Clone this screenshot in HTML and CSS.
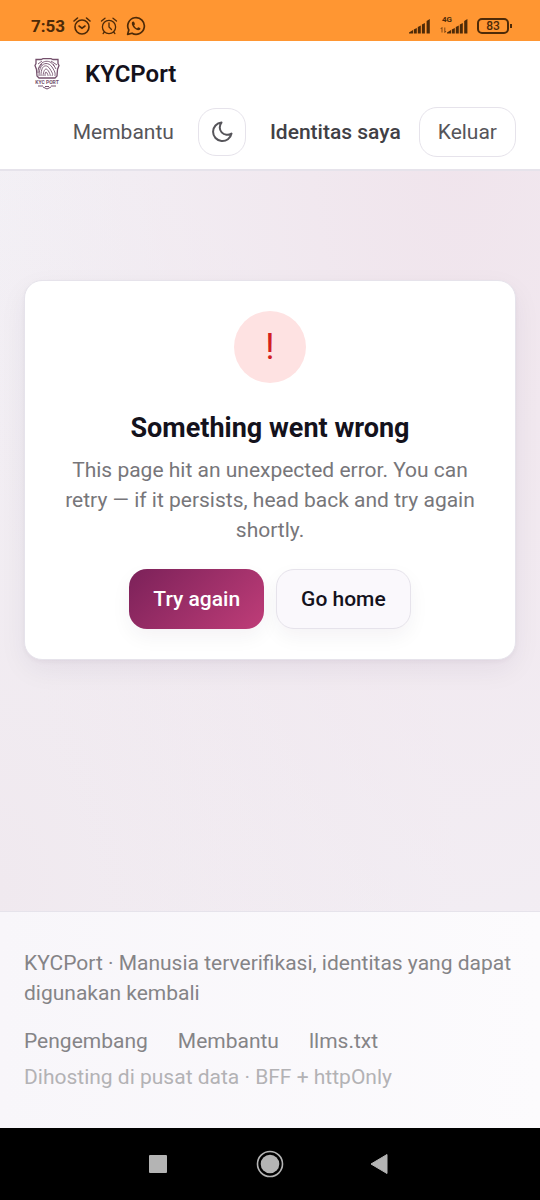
FILE: index.html
```html
<!DOCTYPE html>
<html lang="id">
<head>
    <meta charset="UTF-8">
    <meta name="viewport" content="width=device-width, initial-scale=1.0">
    <title>KYCPort</title>
    <link rel="stylesheet" href="styles.css">
</head>
<body>
    <div class="status-bar">
        <div class="status-left">
            <span class="clock">7:53</span>
            <svg width="20" height="20" viewBox="0 0 20 20" fill="none" stroke="currentColor" stroke-width="1.6" stroke-linecap="round">
                <circle cx="10" cy="11" r="7"/>
                <path d="M7 10l3 2.2 3-2.2M2 5l3.5-3M18 5l-3.5-3"/>
            </svg>
            <svg width="20" height="20" viewBox="0 0 20 20" fill="none" stroke="currentColor" stroke-width="1.3" stroke-linecap="round">
                <circle cx="10" cy="11" r="6.6"/>
                <path d="M10 7v4l2.5 2.5M2.5 5L6 2.2M17.5 5L14 2.2M5.3 16l-1.2 1.6M14.7 16l1.2 1.6"/>
            </svg>
            <svg width="20" height="20" viewBox="0 0 20 20" fill="none" stroke="currentColor" stroke-width="1.7" stroke-linejoin="round">
                <path d="M1.6 18.4l1.2-4.4A8.3 8.3 0 1 1 6 17.2z"/>
                <path d="M7.2 5.6c-.7 0-1.5.9-1.4 2 .2 3 3.7 6.5 6.5 6.7 1.2 0 2.2-.8 2.2-1.7 0-.5-1.8-1.5-2.3-1.4-.4.1-.8 1.2-1.2 1.1-1-.3-2.5-1.7-2.9-2.8-.1-.4.8-.8.8-1.3 0-.6-.7-2.600-1.700-2.600z" fill="currentColor" stroke="none"/>
            </svg>
        </div>
        <div class="status-right">
            <svg width="22" height="16" viewBox="0 0 22 16" fill="currentColor">
                <path d="M0 15.5v-1L4 12v3.5zM4.800 11.500l3-1.500v5.500h-3zM8.800 9l3-1.500v8h-3zM12.900 6.500l3-1.500v10.500h-3zM17.600 3L20.800 1v14.500h-3.200z"/>
            </svg>
            <div class="mobile-data">
                <span class="network">4G</span>
                <svg width="28" height="16" viewBox="0 0 28 16" fill="currentColor">
                    <path d="M2 14.5v-5M.7 11L2 9.5M4.8 9.5v5M4.8 14.5L6 13" fill="none" stroke="currentColor" stroke-width=".7"/>
                    <path d="M7 15.5v-1l4-2.500v3.500zM11.800 11.500l3-1.500v5.500h-3zM15.800 9l3-1.500v8h-3zM19.800 6.500l3-1.500v10.500h-3zM24.200 3l3.200-2v14.500h-3.200z"/>
                </svg>
            </div>
            <span class="battery">83</span>
        </div>
    </div>

    <header class="header">
        <a class="brand" href="#">
            <svg class="brand-logo" width="28" height="32" viewBox="0 0 28 32" fill="none" stroke="currentColor">
                <path d="M3 1.500h5L10 .7h8l2 .8h5v4l1 2-1.500 4L24 18l-2 2H6l-2-2-.5-6.500L2 7.500l1-2z" stroke-width="1.3"/>
                <path d="M5 15c0-13 12-15 16-7M6 18c0-14 9-15 13-9s3 7 3 9M8 18c0-12 6-12 9-7s3 5 2 7M10 18c1-9 4-8 6-4s1 3 1 4M12 18c0-4 1-5 2-3s1 2 1 3M5 6l4-3M18 3l6 4M20 6l3 5M5 11l4-5" stroke-width=".9"/>
                <path d="M5 28h5M18 28h5M10 29l4 2 4-2M12 28.500h4" stroke-width="1"/>
                <text x="14" y="26" text-anchor="middle" font-size="5" font-weight="700" fill="currentColor" stroke="none">KYC PORT</text>
            </svg>
            <span>KYCPort</span>
        </a>
        <nav class="nav">
            <a href="#">Membantu</a>
            <button class="theme-toggle" type="button" aria-label="Mode gelap">
                <svg width="24" height="24" viewBox="0 0 24 24" fill="none" stroke="currentColor" stroke-width="2" stroke-linejoin="round">
                    <path d="M21.500 13.500A9.300 9.300 0 1 1 11.500 2.500a7.500 7.500 0 0 0 10 11z"/>
                </svg>
            </button>
            <a class="active" href="#">Identitas saya</a>
            <button class="logout" type="button">Keluar</button>
        </nav>
    </header>

    <main class="main">
        <section class="card">
            <div class="error-icon">!</div>
            <h1>Something went wrong</h1>
            <p>This page hit an unexpected error. You can retry — if it persists, head back and try again shortly.</p>
            <div class="actions">
                <button class="btn btn-primary" type="button">Try again</button>
                <a class="btn btn-secondary" href="#">Go home</a>
            </div>
        </section>
    </main>

    <footer class="footer">
        <p>KYCPort · Manusia terverifikasi, identitas yang dapat digunakan kembali</p>
        <div class="footer-links">
            <a href="#">Pengembang</a>
            <a href="#">Membantu</a>
            <a href="#">llms.txt</a>
        </div>
        <p class="hosting">Dihosting di pusat data · BFF + httpOnly</p>
    </footer>

    <div class="system-nav">
        <button type="button" aria-label="Recents">
            <svg width="28" height="28" viewBox="0 0 28 28" fill="currentColor"><rect x="4" y="5" width="18" height="18" rx="1"/></svg>
        </button>
        <button type="button" aria-label="Home">
            <svg width="28" height="28" viewBox="0 0 28 28" fill="currentColor"><circle cx="14" cy="14" r="9.3"/><circle cx="14" cy="14" r="12.5" fill="none" stroke="currentColor" stroke-width="1.6"/></svg>
        </button>
        <button type="button" aria-label="Back">
            <svg width="28" height="28" viewBox="0 0 28 28" fill="currentColor" stroke="currentColor" stroke-linejoin="round"><path d="M4 14l16-9.5v19z"/></svg>
        </button>
    </div>
</body>
</html>
```
FILE: styles.css
```css
:root {
    --text: #14121c;
    --muted: #77767a;
    --nav-text: #56555a;
    --border: #e6e3eb;
    --status-bg: #ff9632;
    --status-text: #4d2a08;
}

* {
    box-sizing: border-box;
}

body {
    margin: 0;
    min-height: 100vh;
    display: flex;
    flex-direction: column;
    font-family: Roboto, "Liberation Sans", sans-serif;
    font-size: 21px;
    line-height: 30px;
    color: var(--text);
    background:
        radial-gradient(ellipse at 85% 10%, #f0e4ec 0%, rgba(240, 228, 236, 0) 75%),
        radial-gradient(ellipse at 0% 74%, #f0e9ef 0%, rgba(240, 233, 239, 0) 60%),
        #f3f1f6;
}

a {
    color: inherit;
    text-decoration: none;
}

button {
    font: inherit;
    cursor: pointer;
}

svg {
    display: block;
}

h1, p {
    margin: 0;
}

/* status bar */
.status-bar {
    height: 41px;
    padding: 10px 31px 0;
    display: flex;
    justify-content: space-between;
    background: var(--status-bg);
    color: var(--status-text);
}

.status-left,
.status-right {
    display: flex;
    align-items: center;
}

.status-left {
    gap: 7px;
}

.status-right {
    gap: 9px;
}

.clock {
    font-size: 17px;
    font-weight: 700;
    line-height: 20px;
}

.mobile-data {
    position: relative;
}

.network {
    position: absolute;
    top: -2px;
    left: 2px;
    font-size: 8px;
    font-weight: 700;
    line-height: 8px;
}

.battery {
    position: relative;
    width: 32px;
    border: 2px solid;
    border-radius: 5px;
    font-size: 12px;
    font-weight: 500;
    line-height: 12px;
    text-align: center;
}

.battery::after {
    content: "";
    position: absolute;
    right: -5px;
    top: 4px;
    width: 2px;
    height: 4px;
    background: currentColor;
}

/* header */
.header {
    padding: 12px 24px;
    display: flex;
    flex-direction: column;
    gap: 12px;
    background: #fff;
    border-bottom: 2px solid var(--border);
}

.brand {
    height: 42px;
    padding-left: 9px;
    display: flex;
    align-items: center;
    gap: 24px;
    font-size: 24px;
    font-weight: 600;
}

.brand-logo {
    color: #74506c;
}

.nav {
    display: flex;
    align-items: center;
    justify-content: flex-end;
    gap: 24px;
    color: var(--nav-text);
}

.nav .active {
    color: #414045;
    font-weight: 500;
}

.theme-toggle,
.logout {
    background: #fff;
    border: 1px solid var(--border);
    border-radius: 18px;
    color: var(--nav-text);
}

.theme-toggle {
    width: 48px;
    height: 48px;
    padding: 0;
    display: grid;
    place-items: center;
}

.logout {
    height: 50px;
    padding: 0 18px;
    margin-left: -6px;
}

/* content */
.main {
    flex: 1;
    padding: 109px 24px 48px;
}

.card {
    padding: 30px;
    border: 1px solid var(--border);
    border-radius: 18px;
    background: #fff;
    box-shadow: 0 2px 4px rgba(40, 20, 60, 0.04), 0 10px 28px rgba(40, 20, 60, 0.06);
    text-align: center;
}

.error-icon {
    width: 72px;
    height: 72px;
    margin: 0 auto 28px;
    border-radius: 50%;
    background: #fee2e2;
    color: #d32020;
    font-size: 36px;
    line-height: 72px;
}

.card h1 {
    margin-bottom: 10px;
    font-size: 27px;
    line-height: 34px;
    font-weight: 700;
}

.card p {
    color: var(--muted);
}

.actions {
    margin-top: 24px;
    display: flex;
    justify-content: center;
    gap: 12px;
}

.btn {
    height: 60px;
    padding: 0 24px;
    display: flex;
    align-items: center;
    border: 0;
    border-radius: 18px;
    font-weight: 500;
    box-shadow: 0 8px 20px rgba(40, 20, 60, 0.05);
}

.btn-primary {
    color: #fff;
    background: linear-gradient(135deg, #7b2159, #bf3d78);
}

.btn-secondary {
    background: #faf8fc;
    border: 1px solid var(--border);
}

/* footer */
.footer {
    padding: 36px 24px;
    border-top: 1px solid var(--border);
    background: linear-gradient(90deg, #f8f6fa, #fcfbfd);
    color: #858487;
}

.footer-links {
    margin: 18px 0 6px;
    display: flex;
    gap: 30px;
}

.hosting {
    color: #b3b2b5;
}

/* system buttons */
.system-nav {
    height: 72px;
    display: flex;
    align-items: center;
    justify-content: center;
    gap: 83px;
    background: #000;
}

.system-nav button {
    padding: 0;
    border: 0;
    background: none;
    color: #b4b4b4;
}
```
